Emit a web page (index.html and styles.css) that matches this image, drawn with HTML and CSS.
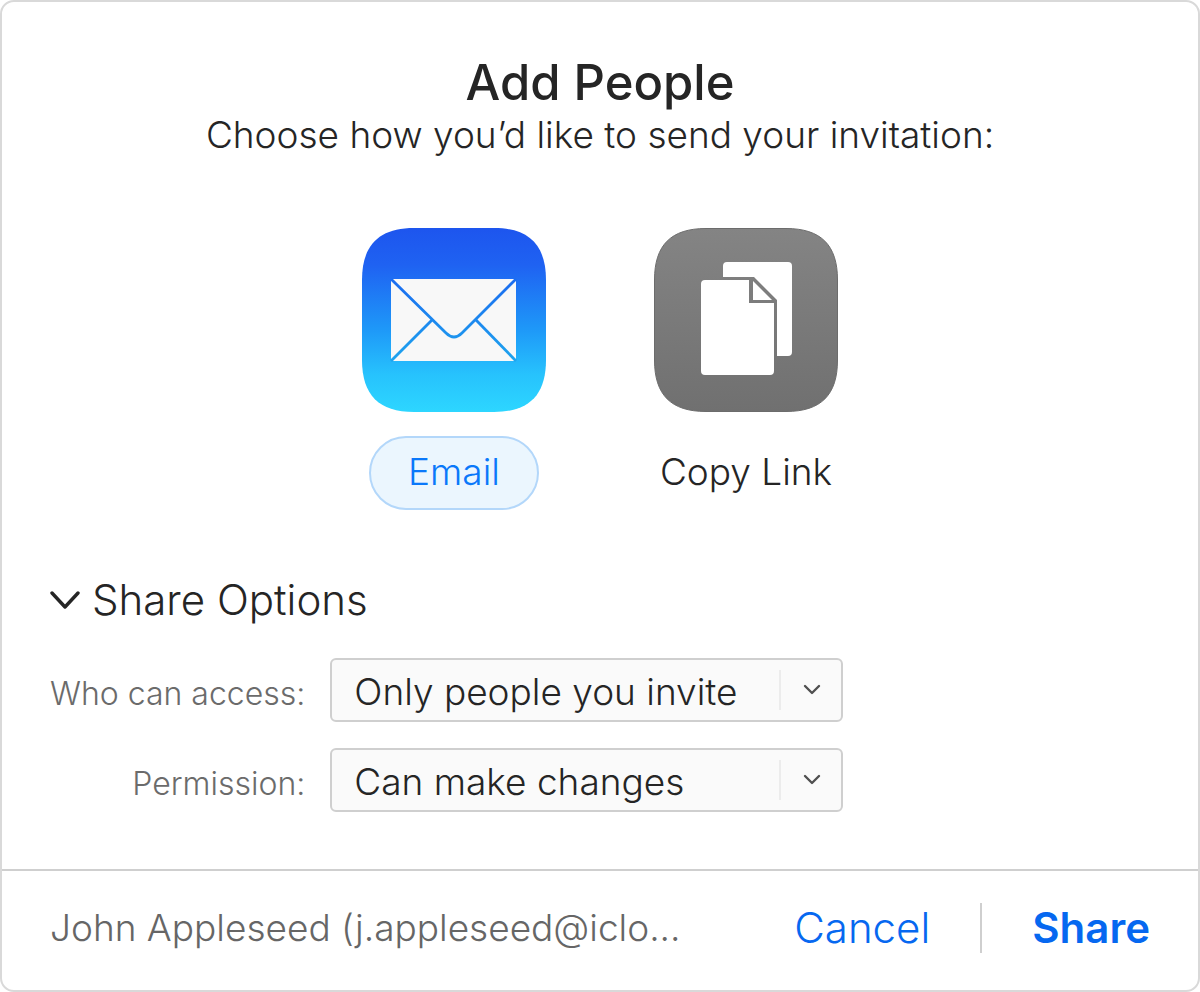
FILE: index.html
```html
<!DOCTYPE html>
<html lang="en">
  <head>
    <meta charset="UTF-8" />
    <meta name="viewport" content="width=device-width, initial-scale=1.0" />
    <title>Add People</title>
    <link rel="stylesheet" href="styles.css">
  </head>
  <body>
    <form class="dialog">
      <div class="content">
        <h1>Add People</h1>
        <p class="subtitle">Choose how you’d like to send your invitation:</p>

        <div class="methods">
          <button type="button" class="method selected">
            <svg class="method-icon" viewBox="0 0 184 184" aria-hidden="true">
              <defs>
                <linearGradient id="mailBg" x1="0" y1="0" x2="0" y2="184" gradientUnits="userSpaceOnUse">
                  <stop offset="0" stop-color="#1d55ee" />
                  <stop offset="0.2" stop-color="#1f62f2" />
                  <stop offset="0.55" stop-color="#1e98f8" />
                  <stop offset="0.8" stop-color="#27c3fd" />
                  <stop offset="1" stop-color="#2dd6ff" />
                </linearGradient>
                <linearGradient id="mailLines" x1="0" y1="51" x2="0" y2="133" gradientUnits="userSpaceOnUse">
                  <stop offset="0" stop-color="#1b6cf0" />
                  <stop offset="1" stop-color="#1ea4ee" />
                </linearGradient>
              </defs>
              <path fill="url(#mailBg)" d="M52 0H132C167 0 184 17 184 52V132C184 167 167 184 132 184H52C17 184 0 167 0 132V52C0 17 17 0 52 0Z" />
              <rect x="29" y="51" width="125" height="82" fill="#f8f8f8" />
              <g fill="none" stroke="url(#mailLines)" stroke-width="2.8">
                <path d="M29 51L84 105Q92 113 100 105L154 51" />
                <path d="M70 92L29 133" />
                <path d="M114 92L154 133" />
              </g>
            </svg>
            <span class="method-name">Email</span>
          </button>
          <button type="button" class="method">
            <svg class="method-icon" viewBox="0 0 184 184" aria-hidden="true">
              <defs>
                <linearGradient id="linkBg" x1="0" y1="0" x2="0" y2="184" gradientUnits="userSpaceOnUse">
                  <stop offset="0" stop-color="#848484" />
                  <stop offset="1" stop-color="#707070" />
                </linearGradient>
              </defs>
              <path fill="url(#linkBg)" stroke="#6c6c6c" d="M52 .5H132C167 .5 183.500 17 183.500 52V132C183.500 167 167 183.500 132 183.500H52C17 183.500 .5 167 .5 132V52C.5 17 17 .5 52 .5Z" />
              <path fill="#fff" d="M69 49V38Q69 34 73 34H134Q138 34 138 38V124Q138 128 134 128H123V72L100 49Z" />
              <path fill="#fff" d="M51 52H95V75H120V143Q120 147 116 147H51Q47 147 47 143V56Q47 52 51 52Z" />
              <path fill="#fff" d="M99 53L118 72H99Z" />
            </svg>
            <span class="method-name">Copy Link</span>
          </button>
        </div>

        <button type="button" class="options-toggle" aria-expanded="true" aria-controls="options">
          <svg width="30" height="20" viewBox="0 0 30 20" aria-hidden="true">
            <path d="M2 3L15 17L28 3" fill="none" stroke="#252525" stroke-width="3.4" stroke-linecap="round" stroke-linejoin="round" />
          </svg>
          Share Options
        </button>

        <div class="options" id="options">
          <label for="access">Who can access:</label>
          <div class="select-box">
            <select id="access">
              <option>Only people you invite</option>
              <option>Anyone with the link</option>
            </select>
            <span class="arrow">
              <svg width="18" height="12" viewBox="0 0 18 12" aria-hidden="true">
                <path d="M2 2L9 9L16 2" />
              </svg>
            </span>
          </div>
          <label for="permission">Permission:</label>
          <div class="select-box">
            <select id="permission">
              <option>Can make changes</option>
              <option>View only</option>
            </select>
            <span class="arrow">
              <svg width="18" height="12" viewBox="0 0 18 12" aria-hidden="true">
                <path d="M2 2L9 9L16 2" />
              </svg>
            </span>
          </div>
        </div>
      </div>

      <div class="footer">
        <span class="account">John Appleseed (j.appleseed@iclo...</span>
        <button type="button" class="cancel">Cancel</button>
        <button type="submit" class="share">Share</button>
      </div>
    </form>
  </body>
</html>
```

FILE: styles.css
```css
* {
  box-sizing: border-box;
}
body {
  margin: 0;
  background-color: #ffffff;
  color: #252525;
  font-family: Inter, "Liberation Sans", sans-serif;
  font-size: 37px;
  font-weight: 300;
}
button,
select {
  margin: 0;
  padding: 0;
  border: none;
  background: none;
  color: inherit;
  font: inherit;
  cursor: pointer;
}
.dialog {
  display: flex;
  flex-direction: column;
  min-height: 100vh;
  border: 2px solid #d9d9d9;
  border-radius: 14px;
}
.content {
  flex: 1;
  padding: 53px 48px 48px;
}
h1 {
  margin: 0;
  font-size: 49px;
  font-weight: 500;
  line-height: 56px;
  text-align: center;
}
.subtitle {
  margin: 0;
  line-height: 48px;
  text-align: center;
}
.methods {
  display: flex;
  justify-content: center;
  gap: 108px;
  margin-top: 69px;
}
.method {
  display: flex;
  flex-direction: column;
  align-items: center;
  width: 184px;
}
.method-icon {
  width: 184px;
  height: 184px;
}
.method-name {
  margin-top: 24px;
  padding: 0 37px 2px;
  border: 2px solid transparent;
  border-radius: 38px;
  line-height: 68px;
  white-space: nowrap;
}
.method.selected .method-name {
  border-color: #b3d7fa;
  background-color: #ebf6fe;
  color: #0a78fa;
}
.options-toggle {
  display: flex;
  align-items: center;
  gap: 12px;
  margin-top: 66px;
  font-size: 42px;
  line-height: 48px;
}
.options {
  display: grid;
  grid-template-columns: max-content minmax(0, 513px);
  align-items: center;
  gap: 26px 25px;
  margin-top: 34px;
}
.options label {
  padding-top: 8px;
  color: #6b6b6b;
  font-size: 32px;
  line-height: 40px;
  text-align: right;
}
.select-box {
  position: relative;
}
select {
  appearance: none;
  display: block;
  width: 100%;
  height: 64px;
  padding: 3px 64px 0 22px;
  border: 2px solid #cfcfcf;
  border-radius: 6px;
  background-color: #fafafa;
}
.arrow {
  position: absolute;
  top: 12px;
  right: 0;
  bottom: 12px;
  display: flex;
  align-items: center;
  justify-content: center;
  width: 64px;
  border-left: 2px solid #ececec;
  pointer-events: none;
}
.arrow path {
  fill: none;
  stroke: #505050;
  stroke-width: 2.4;
  stroke-linecap: round;
  stroke-linejoin: round;
}
.footer {
  display: flex;
  align-items: center;
  height: 121px;
  padding: 0 48px 6px;
  border-top: 2px solid #cfcfcf;
}
.account {
  flex: 1;
  overflow: hidden;
  color: #666666;
  white-space: nowrap;
}
.cancel,
.share {
  color: #0668f0;
  font-size: 42px;
  line-height: 50px;
}
.cancel {
  padding-right: 50px;
  border-right: 2px solid #cfcfcf;
}
.share {
  padding-left: 50px;
  font-weight: 600;
}
```
